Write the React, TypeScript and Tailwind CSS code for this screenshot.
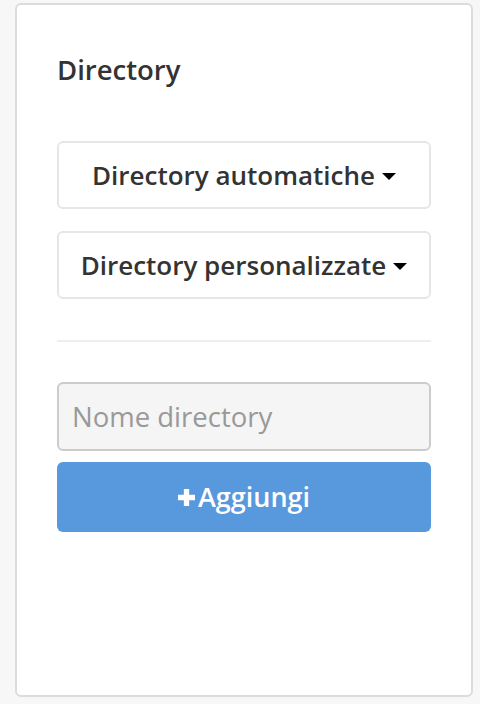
export default function App() {
  return (
    <div className="bg-[#f7f7f7] h-[704px] pt-[3px] pl-[15px] font-['Open_Sans',sans-serif]">
      <div className="w-[458px] h-[694px] bg-white border-2 border-[#dcdcdc] rounded-[6px] px-[40px] pt-[47px]">
        <h2 className="text-[27.5px] leading-[35px] font-semibold text-[#333]">Directory</h2>

        <button className="mt-[54px] flex justify-center items-center w-full h-[68px] border-2 border-[#e6e6e6] rounded-[6px] bg-white text-[26px] font-semibold text-[#333]">
          Directory automatiche
          <span className="ml-[7px] mt-[2px] w-0 h-0 border-t-[7px] border-t-black border-x-[7px] border-x-transparent" />
        </button>

        <button className="mt-[22px] flex justify-center items-center w-full h-[68px] border-2 border-[#e6e6e6] rounded-[6px] bg-white text-[26px] font-semibold text-[#333]">
          Directory personalizzate
          <span className="ml-[7px] mt-[2px] w-0 h-0 border-t-[7px] border-t-black border-x-[7px] border-x-transparent" />
        </button>

        <div className="mt-[41px] h-[2px] bg-[#eeeeee]" />

        <input
          type="text"
          placeholder="Nome directory"
          className="mt-[40px] block w-full h-[69px] bg-[#f5f5f5] border-2 border-[#cccccc] rounded-[6px] px-[13px] text-[27.5px] text-[#333] placeholder:text-[#999] outline-none"
        />

        <button className="mt-[11px] flex justify-center items-center gap-[3px] w-full h-[70px] bg-[#5898dd] rounded-[6px] text-[27px] font-semibold text-white">
          <svg width="17" height="17" viewBox="0 0 16 16" className="mt-[1px]">
            <path d="M8 0v16M0 8h16" stroke="white" strokeWidth="5" />
          </svg>
          Aggiungi
        </button>
      </div>
    </div>
  );
}
